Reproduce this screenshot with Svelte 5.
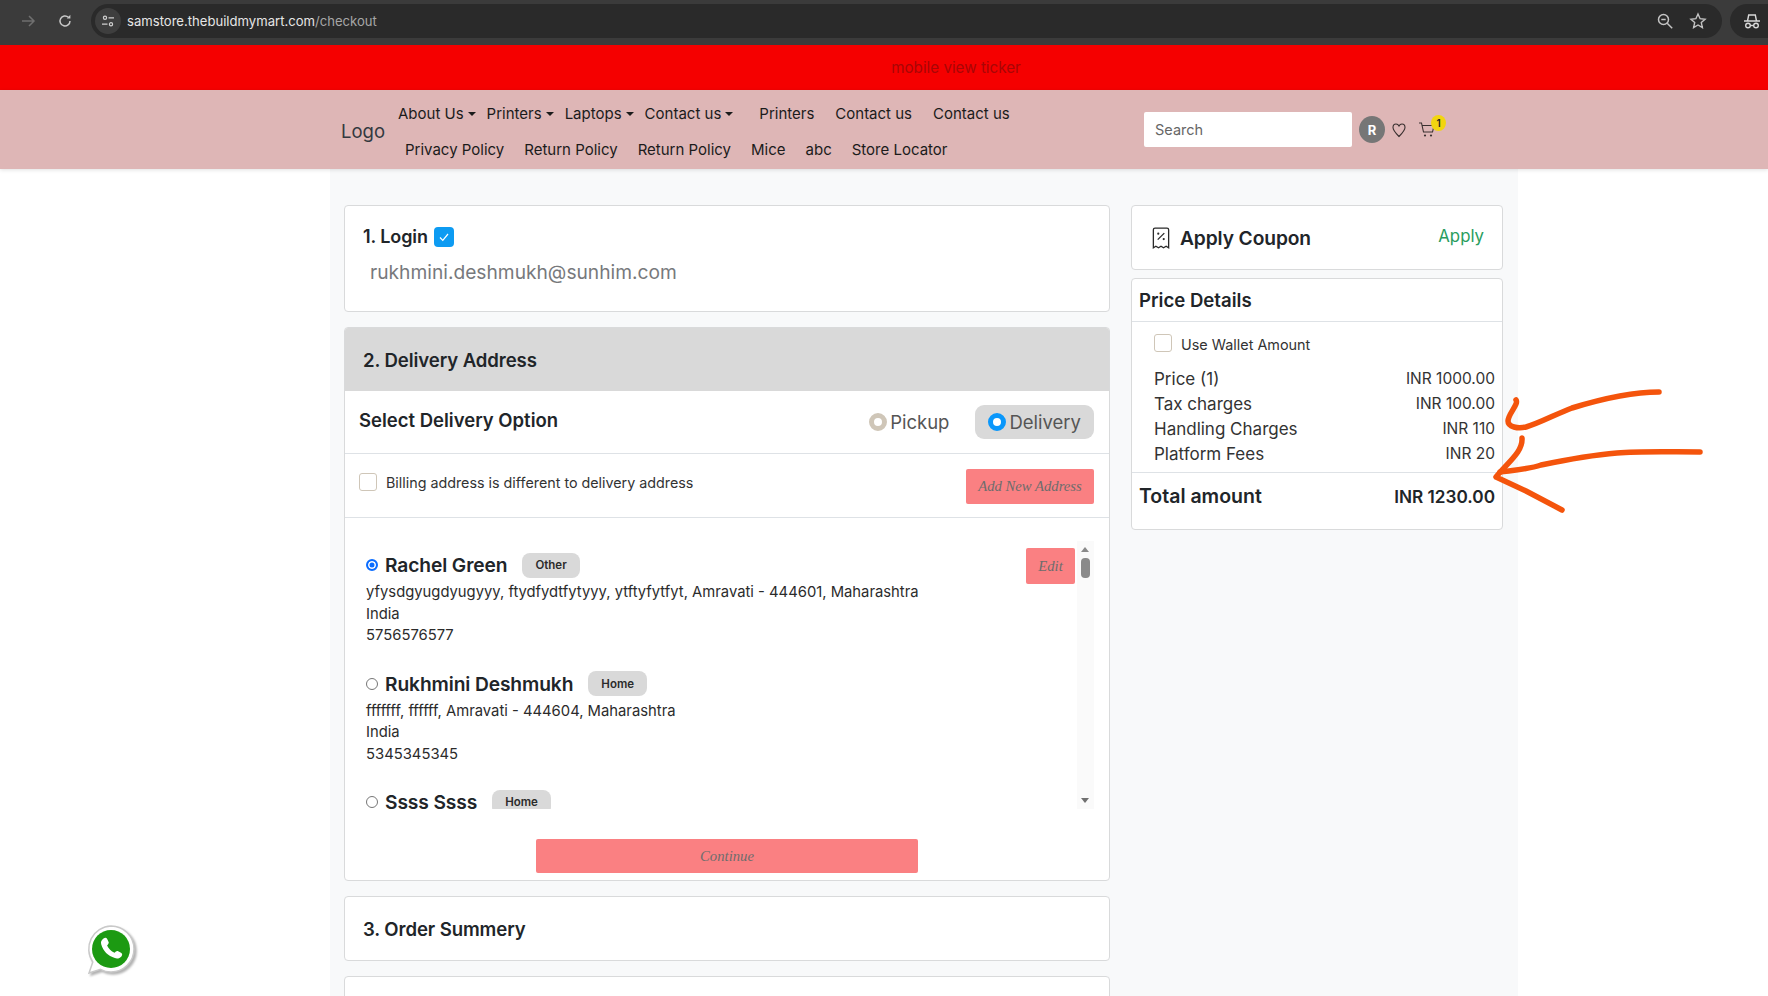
<script>
	const menuTop = [
		{ label: 'About Us', drop: true },
		{ label: 'Printers', drop: true },
		{ label: 'Laptops', drop: true },
		{ label: 'Contact us', drop: true },
		{ label: 'Printers' },
		{ label: 'Contact us' },
		{ label: 'Contact us' }
	];
	const menuBottom = ['Privacy Policy', 'Return Policy', 'Return Policy', 'Mice', 'abc', 'Store Locator'];

	const addresses = [
		{ name: 'Rachel Green', tag: 'Other', lines: ['yfysdgyugdyugyyy, ftydfydtfytyyy, ytftyfytfyt, Amravati - 444601, Maharashtra', 'India', '5756576577'], selected: true },
		{ name: 'Rukhmini Deshmukh', tag: 'Home', lines: ['fffffff, ffffff, Amravati - 444604, Maharashtra', 'India', '5345345345'], selected: false },
		{ name: 'Ssss Ssss', tag: 'Home', lines: [], selected: false }
	];

	const prices = [
		{ label: 'Price (1)', value: 'INR 1000.00' },
		{ label: 'Tax charges', value: 'INR 100.00' },
		{ label: 'Handling Charges', value: 'INR 110' },
		{ label: 'Platform Fees', value: 'INR 20' }
	];
</script>

<div class="page">
	<div class="chrome">
		<svg class="c-back" width="16" height="16" viewBox="0 0 16 16"><path d="M2 8h12M9 3l5 5-5 5" fill="none" stroke="#6f6f6f" stroke-width="1.5" /></svg>
		<svg class="c-reload" width="16" height="16" viewBox="0 0 16 16"><path d="M13 8a5 5 0 1 1-1.6-3.7" fill="none" stroke="#c8c8c8" stroke-width="1.5" /><path d="M13.4 1.8v3.6H9.8z" fill="#c8c8c8" /></svg>
		<div class="omnibox">
			<span class="site-icon">
				<svg width="14" height="14" viewBox="0 0 14 14"><g fill="none" stroke="#d0d0d0" stroke-width="1.2"><circle cx="4" cy="3.8" r="1.6" /><path d="M7.5 3.8H13M1 10.2h5.5" /><circle cx="10" cy="10.2" r="1.6" /></g></svg>
			</span>
			<span class="url">samstore.thebuildmymart.com<span class="url-path">/checkout</span></span>
			<svg class="o-zoom" width="18" height="18" viewBox="0 0 18 18"><g fill="none" stroke="#c4c4c4" stroke-width="1.5"><circle cx="7.5" cy="7.5" r="5" /><path d="M11.2 11.2l5 5M5.3 7.5h4.4" /></g></svg>
			<svg width="18" height="18" viewBox="0 0 18 18"><path d="M9 2l2.1 4.7 5 .5-3.8 3.4 1.1 5L9 13l-4.4 2.6 1.1-5L1.900 7.200l5-.5z" fill="none" stroke="#c4c4c4" stroke-width="1.4" /></svg>
		</div>
		<div class="profile">
			<svg width="18" height="18" viewBox="0 0 18 18"><g fill="none" stroke="#d8d8d8" stroke-width="1.4"><path d="M1 9h16M4.500 9l1.200-6h6.600l1.200 6" /><circle cx="5" cy="13.500" r="2.300" /><circle cx="13" cy="13.500" r="2.300" /><path d="M7.300 13.500h3.400" /></g></svg>
		</div>
	</div>

	<div class="ticker">mobile view ticker</div>

	<header class="nav">
		<div class="logo">Logo</div>
		<nav class="menus">
			<div class="menu-row top">
				{#each menuTop as item}
					<span class="menu-item" class:drop={item.drop}>{item.label}</span>
				{/each}
			</div>
			<div class="menu-row bottom">
				{#each menuBottom as item}
					<span class="menu-item">{item}</span>
				{/each}
			</div>
		</nav>
		<div class="search">Search</div>
		<span class="avatar">R</span>
		<svg class="heart" width="14" height="16" viewBox="0 0 14 16"><path d="M7 14.500C3 10.500 1 8.500 1 5.500 1 3.300 2.500 2 4 2c1.400 0 2.400.8 3 2 .6-1.200 1.600-2 3-2 1.500 0 3 1.300 3 3.500 0 3-2 5-6 9z" fill="none" stroke="#3a3030" stroke-width="1.100" /></svg>
		<span class="cart">
			<svg width="18" height="18" viewBox="0 0 18 18"><g fill="none" stroke="#3a3030" stroke-width="1.100"><path d="M1 2h2.500l2 9h9l1.500-6.500H4.200" /></g><circle cx="7" cy="14.500" r="1.100" fill="#3a3030" /><circle cx="13" cy="14.500" r="1.100" fill="#3a3030" /></svg>
			<span class="cart-badge">1</span>
		</span>
	</header>

	<main class="content">
		<div class="left">
			<section class="card login">
				<h2 class="step">1. Login
					<span class="tick"><svg width="12" height="12" viewBox="0 0 12 12"><path d="M2 6.500l2.800 2.800L10 3" fill="none" stroke="#fff" stroke-width="1.200" /></svg></span>
				</h2>
				<div class="email">rukhmini.deshmukh@sunhim.com</div>
			</section>

			<section class="card delivery">
				<h2 class="step head">2. Delivery Address</h2>
				<div class="option-row">
					<h3>Select Delivery Option</h3>
					<div class="options">
						<span class="option"><i class="dot pickup"></i>Pickup</span>
						<span class="option active"><i class="dot on"></i>Delivery</span>
					</div>
				</div>
				<div class="billing-row">
					<label class="billing"><i class="box"></i>Billing address is different to delivery address</label>
					<button class="btn add">Add New Address</button>
				</div>
				<div class="list-wrap">
					<div class="list">
						{#each addresses as a}
							<div class="address">
								<div class="addr-head">
									<i class="radio" class:checked={a.selected}></i>
									<span class="addr-name">{a.name}</span>
									<span class="chip">{a.tag}</span>
									{#if a.selected}<button class="btn edit">Edit</button>{/if}
								</div>
								{#each a.lines as line}
									<p>{line}</p>
								{/each}
							</div>
						{/each}
					</div>
					<div class="scrollbar">
						<i class="arrow up"></i>
						<i class="thumb"></i>
						<i class="arrow down"></i>
					</div>
				</div>
				<div class="continue-row"><button class="btn continue">Continue</button></div>
			</section>

			<section class="card summary"><h2 class="step">3. Order Summery</h2></section>
			<section class="card last"></section>
		</div>

		<aside class="right">
			<section class="card coupon">
				<svg width="22" height="24" viewBox="0 0 20 22"><g fill="none" stroke="#2a2a2a" stroke-width="1.200"><path d="M3 20V3.500C3 2.500 3.800 2 4.500 2h11c.8 0 1.500.6 1.500 1.500V20l-2.300-1.500L12.300 20 10 18.500 7.700 20l-2.400-1.500z" /><path d="M7 12.500l6-6" /></g><circle cx="7.500" cy="7" r="1" fill="#2a2a2a" /><circle cx="12.500" cy="12" r="1" fill="#2a2a2a" /></svg>
				<span class="coupon-title">Apply Coupon</span>
				<span class="apply">Apply</span>
			</section>

			<section class="card price">
				<h3 class="price-title">Price Details</h3>
				<div class="price-body">
					<label class="wallet"><i class="box"></i><span>Use Wallet Amount</span></label>
					{#each prices as p}
						<div class="price-row"><span class="price-label">{p.label}</span><span>{p.value}</span></div>
					{/each}
				</div>
				<div class="total"><span class="total-label">Total amount</span><span>INR 1230.00</span></div>
			</section>
		</aside>
	</main>

	<button class="whatsapp" aria-label="WhatsApp">
		<svg width="56" height="56" viewBox="0 0 56 56">
			<path d="M28 4a23 23 0 0 1 0 46c-4 0-7.500-1-10.500-2.700L6 51l3.800-11A23 23 0 0 1 28 4z" fill="#fff" stroke="#c9c9c9" stroke-width="1.500" />
			<circle cx="28" cy="27" r="19" fill="#1c9a12" />
			<path d="M20.500 16.500c1.500-1.200 3-1 3.700.5l1.500 3.300c.4 1-.8 2.200-1.600 3.200 1.500 3.300 4 5.700 7.400 7.200 1-.8 2.200-2 3.200-1.600l3.300 1.600c1.400.7 1.600 2.200.4 3.700-1.500 1.800-3.900 2.500-6.500 1.700-7-2.200-11.800-7-13.700-13.800-.7-2.500.3-4.400 2.300-5.800z" fill="#fff" />
		</svg>
	</button>

	<svg class="scribble" width="1768" height="996" viewBox="0 0 1768 996" aria-hidden="true">
		<g fill="none" stroke="#f4540c" stroke-width="5.500" stroke-linecap="round" stroke-linejoin="round">
			<path d="M1516 400c3 4-8 14-8 21 0 6 10 8 18 6 14-4 30-13 46-19 26-8 58-16 87-16" />
			<path d="M1522 438c1 14-14 24-26 39l30 14 36 19" />
			<path d="M1500 472c16-2 30-3 41-7 24-5 52-10 76-12 24-2 52-1 83-1" />
		</g>
	</svg>
</div>

<style>
	:global(body) { margin: 0; background: #fff; font-family: Inter, "Open Sans", sans-serif; color: #212529; }
	.page { position: relative; height: 996px; overflow: hidden; }
	h2, h3, p { margin: 0; }
	i { display: block; }

	.chrome { height: 45px; background: #3b3b3b; display: flex; align-items: center; box-sizing: border-box; padding: 0 0 3px 20px; }
	.c-back { margin-right: 21px; }
	.c-reload { margin-right: 10px; }
	.omnibox { flex: none; width: 1631px; height: 34px; margin-left: 8px; border-radius: 17px; background: #2a2a2a; display: flex; align-items: center; box-sizing: border-box; padding: 0 15px 0 4px; }
	.site-icon { width: 26px; height: 26px; border-radius: 50%; background: #3e3e3e; display: flex; align-items: center; justify-content: center; }
	.url { flex: 1; margin-left: 6px; font-size: 13.100px; color: #e6e6e6; }
	.url-path { color: #a6a6a6; }
	.o-zoom { margin-right: 15px; }
	.profile { flex: none; margin-left: 8px; width: 38px; height: 34px; border-radius: 17px 0 0 17px; background: #2a2a2a; box-sizing: border-box; padding: 8px 0 0 13px; }

	.ticker { height: 45px; background: #f50000; display: flex; align-items: center; justify-content: center; box-sizing: border-box; padding-left: 144px; font-size: 15.200px; color: #a80606; }

	.nav { height: 79px; background: #deb6b6; box-shadow: 0 1px 4px rgba(0, 0, 0, 0.12); display: flex; align-items: center; position: relative; padding-left: 341px; }
	.logo { font-size: 18.500px; color: #33393f; width: 57px; margin-top: 3px; }
	.menus { width: 746px; display: flex; flex-direction: column; gap: 18px; margin-top: 4px; }
	.menu-row { display: flex; font-size: 15px; color: #1b1b1b; line-height: 18px; }
	.menu-row.top { gap: 11px; }
	.menu-row.bottom { gap: 20px; padding-left: 7px; }
	.menu-item.drop { display: inline-flex; align-items: center; gap: 4px; }
	.menu-item.drop::after { content: ''; border: 4px solid transparent; border-top-color: #1b1b1b; border-bottom: 0; }
	.top .menu-item:nth-child(5) { margin-left: 15px; }
	.top .menu-item:nth-child(6), .top .menu-item:nth-child(7) { margin-left: 10px; }
	.search { width: 208px; height: 35px; box-sizing: border-box; background: #fff; border-radius: 2px; padding: 0 11px; display: flex; align-items: center; font-size: 14.500px; color: #666; margin-top: -1px; }
	.avatar { width: 26px; height: 27px; margin-left: 7px; border-radius: 50%; background: #767676; color: #fff; font-weight: 700; font-size: 13px; display: flex; align-items: center; justify-content: center; }
	.heart { margin-left: 7px; }
	.cart { position: relative; margin-left: 12px; height: 18px; }
	.cart-badge { position: absolute; left: 13px; top: -6px; width: 15px; height: 16px; border-radius: 50%; background: #f2d50f; font-size: 10px; font-weight: 600; display: flex; align-items: center; justify-content: center; color: #222; }

	.content { margin-left: 330px; width: 1188px; height: 827px; background: #f8f9fa; box-sizing: border-box; padding: 36px 15px 0 14px; display: flex; gap: 21px; align-items: flex-start; }
	.left { width: 766px; flex: none; display: flex; flex-direction: column; gap: 15px; }
	.right { width: 372px; flex: none; display: flex; flex-direction: column; gap: 8px; }
	.card { background: #fff; border: 1px solid #d9dadb; border-radius: 4px; box-sizing: border-box; }

	.step { font-size: 18.600px; font-weight: 600; color: #212529; display: flex; align-items: center; gap: 6px; letter-spacing: -0.1px; }
	.login { height: 107px; padding: 20px 18px; }
	.login .step { font-size: 18px; }
	.tick { width: 20px; height: 20px; border-radius: 4px; background: #0d9bf2; display: flex; align-items: center; justify-content: center; }
	.email { margin: 13px 0 0 7px; font-size: 19.200px; color: #77797c; }

	.delivery { height: 554px; overflow: hidden; }
	.head { height: 63px; background: #d9d9d9; padding-left: 18px; }
	.option-row { height: 63px; box-sizing: border-box; padding: 0 15px 0 14px; display: flex; align-items: center; justify-content: space-between; border-bottom: 1px solid #dee2e6; }
	.option-row h3 { font-size: 18.500px; font-weight: 600; margin-top: -5px; }
	.options { display: flex; align-items: center; gap: 13px; font-size: 18.500px; color: #555; }
	.option { display: flex; align-items: center; gap: 3px; height: 34px; padding: 0 13px; border-radius: 9px; }
	.option.active { background: #d9d9d9; }
	.dot { width: 18px; height: 18px; box-sizing: border-box; border-radius: 50%; border: 5px solid #cfc6b8; background: #fff; }
	.dot.on { border-color: #0a97fb; }

	.billing-row { height: 64px; box-sizing: border-box; padding: 15px 15px 0 14px; display: flex; justify-content: space-between; align-items: flex-start; border-bottom: 1px solid #dee2e6; }
	.billing { display: flex; align-items: center; gap: 9px; font-size: 14.300px; color: #333; margin-top: 4px; }
	.box { flex: none; width: 18px; height: 18px; box-sizing: border-box; border: 1px solid #cfc6b8; border-radius: 3px; background: #fff; }
	.btn { border: 0; background: #fa8082; border-radius: 2px; font-family: "Liberation Serif", serif; font-style: italic; color: #6d6d6d; padding: 0; font-size: 14.700px; }
	.add { width: 128px; height: 35px; }

	.list-wrap { position: relative; height: 268px; margin-top: 23px; }
	.list { height: 268px; overflow: hidden; padding: 0 34px 0 21px; }
	.address { margin-bottom: 13px; font-size: 14.800px; color: #2b2b2b; position: relative; padding-top: 11px; }
	.address p { line-height: 21.500px; }
	.addr-head { display: flex; align-items: center; height: 26px; margin-bottom: 4px; }
	.radio { width: 12px; height: 12px; box-sizing: border-box; border: 1px solid #767676; border-radius: 50%; margin-right: 7px; }
	.radio.checked { border: 2px solid #0a6cff; background: #0a6cff; box-shadow: inset 0 0 0 1.500px #fff; }
	.addr-name { font-size: 19.200px; font-weight: 600; color: #212529; letter-spacing: -0.1px; }
	.chip { margin-left: 15px; height: 25px; padding: 0 13px; border-radius: 8px; background: #d9d9d9; font-size: 11.500px; font-weight: 600; display: flex; align-items: center; color: #2b2b2b; }
	.edit { position: absolute; right: 0; top: 7px; width: 49px; height: 36px; }
	.scrollbar { position: absolute; right: 15px; top: 0; width: 17px; height: 268px; background: #fafafa; }
	.thumb { position: absolute; left: 4px; top: 17px; width: 9px; height: 20px; border-radius: 4px; background: #8a8a8a; }
	.arrow { position: absolute; left: 4px; border: 4.500px solid transparent; }
	.arrow.up { top: 6px; border-top: 0; border-bottom: 5px solid #8a8a8a; }
	.arrow.down { bottom: 6px; border-bottom: 0; border-top: 5px solid #707070; }

	.continue-row { display: flex; justify-content: center; margin-top: 30px; }
	.continue { width: 382px; height: 34px; }

	.summary { height: 65px; padding-left: 18px; display: flex; align-items: center; }
	.last { height: 60px; }

	.coupon { height: 65px; display: flex; align-items: center; padding: 0 18px 0 18px; gap: 8px; }
	.coupon-title { flex: 1; font-size: 19.200px; font-weight: 600; letter-spacing: -0.1px; }
	.apply { font-size: 16.800px; color: #2a9d5e; margin-top: -3px; }

	.price { height: 252px; }
	.price-title { height: 43px; box-sizing: border-box; padding-left: 7px; display: flex; align-items: center; font-size: 18.600px; font-weight: 600; border-bottom: 1px solid #dee2e6; }
	.price-body { padding: 11px 7px 0 22px; height: 150px; box-sizing: border-box; }
	.wallet { display: flex; align-items: center; gap: 9px; font-size: 14.400px; color: #333; margin-bottom: 13px; }
	.wallet span { margin-top: 3px; }
	.price-row { display: flex; justify-content: space-between; font-size: 15.500px; color: #333; height: 25px; align-items: center; }
	.price-label { font-size: 17px; }
	.total { border-top: 1px solid #dee2e6; padding: 11px 7px 0; display: flex; justify-content: space-between; align-items: center; font-size: 17.200px; font-weight: 600; }
	.total-label { font-size: 19.500px; }

	.whatsapp { position: absolute; left: 83px; top: 922px; width: 56px; height: 56px; border: 0; background: none; padding: 0; filter: drop-shadow(2px 2px 1px rgba(0, 0, 0, 0.3)); }
	.scribble { position: absolute; left: 0; top: 0; pointer-events: none; }
</style>
